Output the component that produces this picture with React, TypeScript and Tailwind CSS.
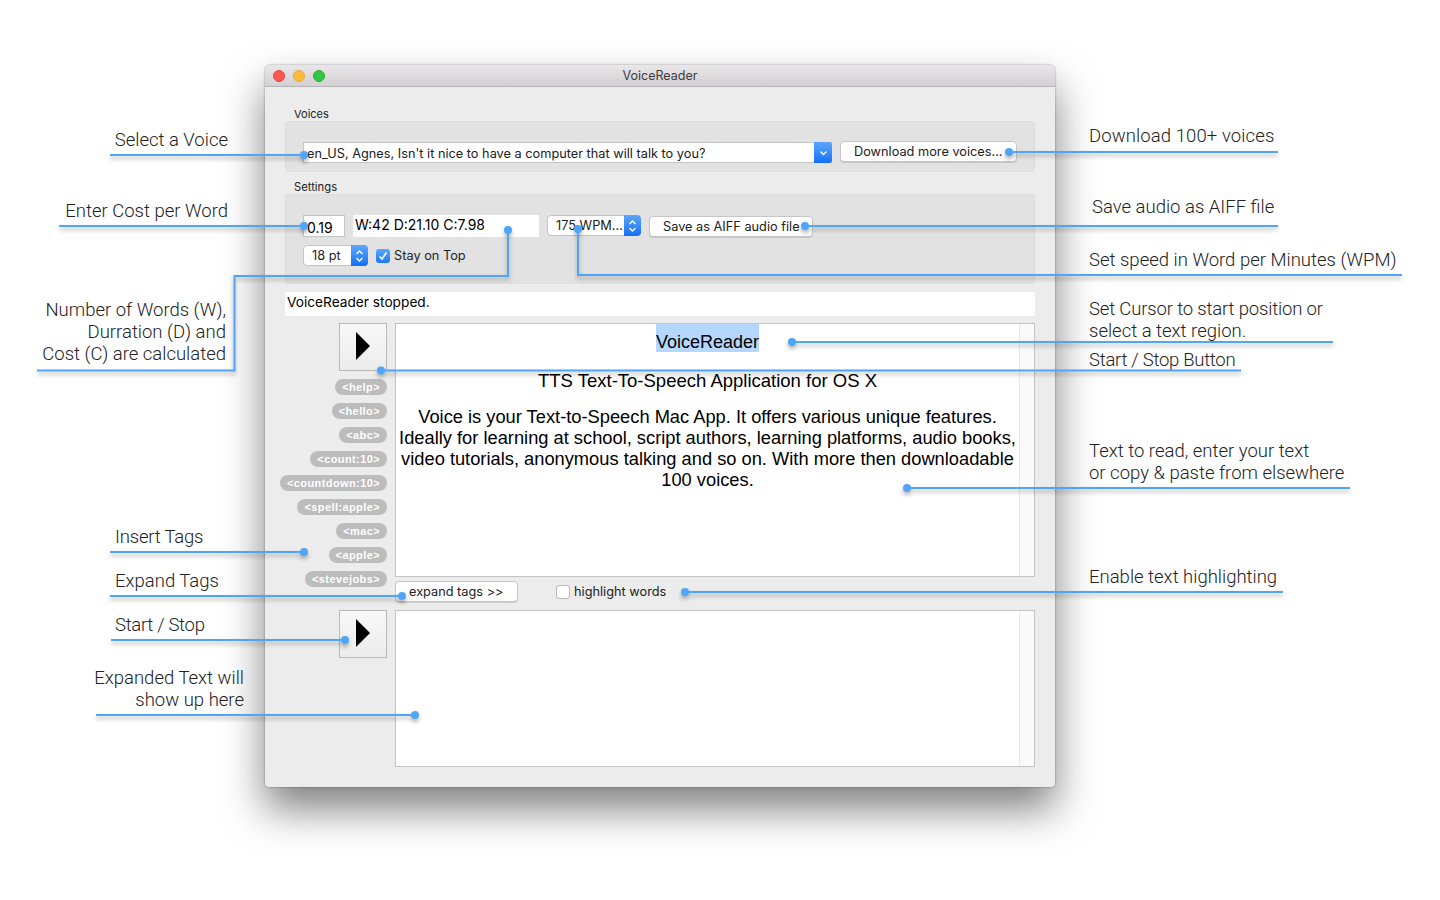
const ui = "font-['Inter','Roboto',sans-serif]";

const tags = [
  "<help>",
  "<hello>",
  "<abc>",
  "<count:10>",
  "<countdown:10>",
  "<spell:apple>",
  "<mac>",
  "<apple>",
  "<stevejobs>",
];

function Chevrons() {
  return (
    <svg width="9" height="14" viewBox="0 0 9 14" fill="none" stroke="white" strokeWidth="1.4">
      <path d="M1.5 5 4.5 2 7.5 5" />
      <path d="M1.5 9 4.5 12 7.5 9" />
    </svg>
  );
}

function ChevronDown() {
  return (
    <svg width="9" height="6" viewBox="0 0 9 6" fill="none" stroke="white" strokeWidth="1.4">
      <path d="M1.5 1.5 4.5 4.5 7.5 1.5" />
    </svg>
  );
}

function Stepper({ label, className }: { label: string; className: string }) {
  return (
    <div className={`flex h-[21px] items-stretch rounded-[4px] border border-[#c4c4c4] bg-white text-[12.75px] text-[#222] ${className}`}>
      <span className="flex-1 truncate pl-2 leading-[19px]">{label}</span>
      <span className="-my-px -mr-px flex w-[17px] shrink-0 items-center justify-center rounded-r-[4px] bg-gradient-to-b from-[#5ba6fb] to-[#0f6ff5]">
        <Chevrons />
      </span>
    </div>
  );
}

function PushButton({ label, className }: { label: string; className: string }) {
  return (
    <div className={`h-[21px] rounded-[4px] border border-[#c6c6c6] bg-white text-[12.75px] leading-[19px] text-[#222] shadow-[0_1px_0_rgba(0,0,0,0.12)] ${className}`}>
      {label}
    </div>
  );
}

function PlayButton() {
  return (
    <div className="flex size-12 items-center justify-center border border-[#b9b9b9] bg-gradient-to-b from-[#f8f8f8] to-[#ececec]">
      <svg className="-mt-[2px]" width="14" height="28" viewBox="0 0 14 28">
        <path d="M0 0 14 14 0 28Z" fill="#000" />
      </svg>
    </div>
  );
}

function Gutter() {
  return <div className="w-[15px] shrink-0 border-l border-[#e9e9e9] bg-[#fafafa]" />;
}

function Window() {
  return (
    <div className={`flex h-[722px] w-[790px] flex-col overflow-hidden rounded-t-[5px] rounded-b-[4px] bg-[#ececec] shadow-[0_22px_42px_rgba(0,0,0,0.5),0_0_2px_rgba(0,0,0,0.45)] ${ui}`}>
      <div className="relative flex h-[22px] shrink-0 items-center justify-center border-b border-[#b4b4b4] bg-gradient-to-b from-[#e9e7e9] to-[#d2d0d2] pt-[2px] text-[12.5px] text-[#3c3c3c]">
        <div className="absolute left-2 top-[5px] flex gap-2">
          <span className="size-3 rounded-full border border-[#e2463f] bg-[#fc5753]" />
          <span className="size-3 rounded-full border border-[#e1a73e] bg-[#fdbc40]" />
          <span className="size-3 rounded-full border border-[#2dac2f] bg-[#33c748]" />
        </div>
        VoiceReader
      </div>

      <div className="flex flex-1 flex-col pl-5 pr-5 pt-5 text-[#222]">
        <div className="h-[14px] pl-[9px] text-[11px] leading-[15px]">Voices</div>
        <div className="flex h-[51px] items-start gap-2 rounded-[3px] border border-[#dedede] bg-[#e2e2e2] pl-[17px] pt-[20px]">
          <div className="flex h-[21px] w-[529px] items-stretch border border-[#c4c4c4] bg-white text-[12.75px]">
            <span className="flex-1 truncate pl-[3px] leading-[21px]">en_US, Agnes, Isn't it nice to have a computer that will talk to you?</span>
            <span className="-my-px -mr-px flex w-[18px] items-center justify-center rounded-r-[3px] bg-gradient-to-b from-[#5ba6fb] to-[#0f6ff5]">
              <ChevronDown />
            </span>
          </div>
          <PushButton label="Download more voices..." className="-mt-px w-[177px] pl-[13px]" />
        </div>

        <div className="mt-2 h-[14px] pl-[9px] text-[11.25px] leading-[15px]">Settings</div>
        <div className="flex h-[90px] flex-col rounded-[3px] border border-[#dedede] bg-[#e2e2e2] pl-[17px] pt-[20px]">
          <div className="flex items-start gap-2">
            <div className="h-[22px] w-[42px] border border-[#c4c4c4] bg-white pl-[3px] text-[14px] leading-[23px] text-black">0.19</div>
            <div className="h-[22px] w-[186px] bg-white pl-[2px] text-[14px] leading-[20px] text-black">W:42 D:21.10 C:7.98</div>
            <Stepper label="175 WPM..." className="w-[94px]" />
            <PushButton label="Save as AIFF audio file" className="mt-px w-[164px] pl-[13px]" />
          </div>
          <div className="mt-2 flex items-center gap-2">
            <Stepper label="18 pt" className="w-[65px]" />
            <span className="flex size-[14px] items-center justify-center rounded-[3px] bg-gradient-to-b from-[#5ba6fb] to-[#1a78f6]">
              <svg width="10" height="10" viewBox="0 0 10 10" fill="none" stroke="white" strokeWidth="1.6">
                <path d="M1.5 5.5 4 8 8.5 1.5" />
              </svg>
            </span>
            <span className="-ml-1 text-[12.75px]">Stay on Top</span>
          </div>
        </div>

        <div className="mt-2 h-6 bg-white pl-[2px] text-[13.7px] leading-[21px] text-black">VoiceReader stopped.</div>

        <div className="-ml-5 mt-[7px] flex h-[279px]">
          <div className="flex w-[130px] shrink-0 flex-col items-end pr-2">
            <PlayButton />
            <div className="mt-2 flex flex-col items-end gap-2">
              {tags.map((tag) => (
                <span key={tag} className="h-4 rounded-full bg-[#bcbcbc] px-[7px] font-['Liberation_Sans',sans-serif] text-[11px] font-bold leading-4 tracking-[0.4px] text-white">
                  {tag}
                </span>
              ))}
            </div>
          </div>
          <div className="flex flex-1 flex-col">
            <div className="flex h-[254px] border border-[#c4c4c4] bg-white">
              <div className="flex-1 text-center font-['Liberation_Sans',sans-serif] text-[18.3px] leading-[21px] text-black">
                <div className="h-[28px] leading-[36px]">
                  <span className="inline-block h-[28px] bg-[#b3d7ff] align-top text-[18px]">VoiceReader</span>
                </div>
                <div className="mt-[18px] text-[18.5px]">TTS Text-To-Speech Application for OS X</div>
                <div className="mt-[15px]">
                  Voice is your Text-to-Speech Mac App. It offers various unique features.
                  <br />
                  Ideally for learning at school, script authors, learning platforms, audio books,
                  <br />
                  video tutorials, anonymous talking and so on. With more then downloadable
                  <br />
                  100 voices.
                </div>
              </div>
              <Gutter />
            </div>
            <div className="mt-1 flex items-center">
              <PushButton label="expand tags >>" className="w-[123px] pl-[13px]" />
              <span className="ml-[38px] size-[14px] rounded-[3px] border border-[#b9b9b9] bg-white" />
              <span className="ml-1 pt-px text-[12.75px]">highlight words</span>
            </div>
          </div>
        </div>

        <div className="-ml-5 mt-2 flex h-[157px]">
          <div className="flex w-[130px] shrink-0 justify-end pr-2">
            <PlayButton />
          </div>
          <div className="flex flex-1 border border-[#c4c4c4] bg-white">
            <div className="flex-1" />
            <Gutter />
          </div>
        </div>
      </div>
    </div>
  );
}

function Leaders() {
  const lines = [
    "M110 155H304",
    "M59 226H304",
    "M37 370.5H234.5V276H508V230",
    "M110 552H304",
    "M110 596H402",
    "M111 640H345",
    "M96 715H415",
    "M1009 152H1278",
    "M805 226H1278",
    "M578 229V275H1402",
    "M792 342H1333",
    "M381 370.5H1241",
    "M907 488H1350",
    "M685 592H1283",
  ];
  const dots = [
    [304, 155], [304, 226], [508, 230], [304, 552], [402, 596], [345, 640], [415, 715],
    [1009, 152], [805, 226], [578, 229], [792, 342], [381, 370.5], [907, 488], [685, 592],
  ];
  return (
    <svg className="pointer-events-none absolute left-0 top-0 drop-shadow-[0_3px_2px_rgba(0,0,0,0.3)]" width="1440" height="900" fill="none">
      {lines.map((d) => (
        <path key={d} d={d} stroke="#4fa5fa" strokeWidth="2" />
      ))}
      {dots.map(([cx, cy]) => (
        <circle key={`${cx}-${cy}`} cx={cx} cy={cy} r="4" fill="#4fa5fa" />
      ))}
    </svg>
  );
}

function Notes() {
  const note = "absolute whitespace-nowrap text-[18.5px] font-light leading-[22px] text-[#222]";
  return (
    <div className="font-['Roboto','Liberation_Sans',sans-serif]">
      <div className={`${note} right-[1212px] top-[129px]`}>Select a Voice</div>
      <div className={`${note} right-[1212px] top-[200px]`}>Enter Cost per Word</div>
      <div className={`${note} right-[1214px] top-[299px] text-right`}>
        Number of Words (W),
        <br />
        Durration (D) and
        <br />
        Cost (C) are calculated
      </div>
      <div className={`${note} left-[115px] top-[526px] tracking-[-0.2px]`}>Insert Tags</div>
      <div className={`${note} left-[115px] top-[570px]`}>Expand Tags</div>
      <div className={`${note} left-[115px] top-[614px] tracking-[-0.3px]`}>Start / Stop</div>
      <div className={`${note} right-[1196px] top-[667px] text-right`}>
        Expanded Text will
        <br />
        show up here
      </div>
      <div className={`${note} left-[1089px] top-[125px] tracking-[0.1px]`}>Download 100+ voices</div>
      <div className={`${note} left-[1092px] top-[196px]`}>Save audio as AIFF file</div>
      <div className={`${note} left-[1089px] top-[249px]`}>Set speed in Word per Minutes (WPM)</div>
      <div className={`${note} left-[1089px] top-[298px]`}>
        <span className="tracking-[-0.16px]">Set Cursor to start position or</span>
        <br />
        select a text region.
      </div>
      <div className={`${note} left-[1089px] top-[349px] tracking-[-0.27px]`}>Start / Stop Button</div>
      <div className={`${note} left-[1089px] top-[440px]`}>
        Text to read, enter your text
        <br />
        or copy &amp; paste from elsewhere
      </div>
      <div className={`${note} left-[1089px] top-[566px]`}>Enable text highlighting</div>
    </div>
  );
}

export default function App() {
  return (
    <div className="relative h-[900px] w-[1440px] overflow-hidden bg-white pl-[265px] pt-[65px]">
      <Window />
      <Notes />
      <Leaders />
    </div>
  );
}
